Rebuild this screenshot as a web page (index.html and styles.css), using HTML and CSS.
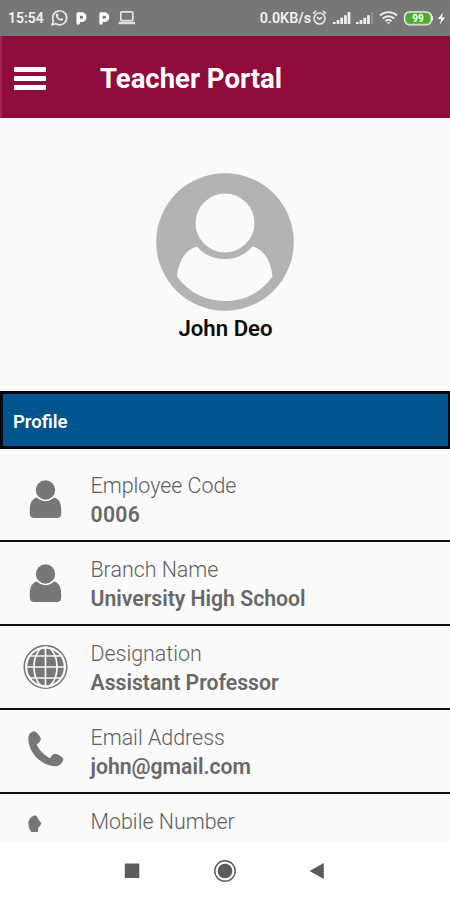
FILE: index.html
```html
<!DOCTYPE html>
<html lang="en">

<head>
    <meta charset="UTF-8">
    <meta name="viewport" content="width=device-width, initial-scale=1.0">
    <title>Teacher Portal</title>
    <link rel="stylesheet" href="styles.css">
</head>

<body>
    <div class="status-bar">
        <span class="time">15:54</span>
        <svg class="status-left" width="88" height="20" viewBox="0 0 88 20">
            <!-- chat -->
            <path d="M2.2 16.8l1.2-4A7 7 0 1 1 6 15.7z" fill="none" stroke="#e6e6e6" stroke-width="1.7" />
            <path d="M6.4 5.8c.8-.8 1.5-.3 2.2 1.5l-.7 1.1c.6 1.2 1.4 2 2.6 2.5l1.1-.9c1.8.7 2 1.3 1.4 2.1-2.8 2.8-9-3-6.6-6.3z" fill="#e6e6e6" />
            <!-- parking -->
            <path d="M28.2 15V6h3.400a3.200 3.200 0 0 1 0 6.400h-1.600" fill="none" stroke="#fff" stroke-width="3.400" stroke-linejoin="round" stroke-linecap="round" />
            <path d="M51 15V6h3.400a3.200 3.200 0 0 1 0 6.400h-1.600" fill="none" stroke="#fff" stroke-width="3.400" stroke-linejoin="round" stroke-linecap="round" />
            <!-- laptop -->
            <rect x="70.800" y="3.800" width="12" height="8.800" rx="1" fill="none" stroke="#e0e0e0" stroke-width="1.700" />
            <path d="M68.500 13.700h16.500v2.500H68.500z" fill="#e0e0e0" />
        </svg>
        <span class="speed">0.0KB/s</span>
        <svg class="status-right" width="136" height="20" viewBox="0 0 136 20">
            <!-- alarm -->
            <circle cx="8.500" cy="10.500" r="5.500" fill="none" stroke="#e6e6e6" stroke-width="1.600" />
            <path d="M2 5.600l3.300-2.800M15 5.600l-3.300-2.800M5.800 9.200l2.700 2 2.500-2" fill="none" stroke="#e6e6e6" stroke-width="1.600" />
            <!-- signal -->
            <path d="M23.300 16v-2M27 16v-4M30.700 16V9.800M34.400 16V7.300M38 16V4" stroke="#eee" stroke-width="2.700" />
            <path d="M46.300 16v-2M50 16v-4M53.700 16V9.800M57.400 16V7.300" stroke="#eee" stroke-width="2.700" />
            <path d="M61 16V4" stroke="#9a9a9a" stroke-width="1.500" />
            <!-- wifi -->
            <path d="M69 7.500a12.500 12.500 0 0 1 17 0M71.800 10.500a8.300 8.300 0 0 1 11.400 0M74.400 13.200a4.600 4.600 0 0 1 6.200 0" fill="none" stroke="#eee" stroke-width="1.900" />
            <path d="M75.800 14.200h3.400l-1.700 2z" fill="#eee" />
            <!-- battery -->
            <rect x="93.500" y="3.800" width="27" height="13" rx="5" fill="#8aa37e" stroke="#e8f2e4" stroke-width="1.300" />
            <rect x="95.500" y="5.500" width="23" height="9.600" rx="3.500" fill="#45b31f" />
            <path d="M121.300 8v4.600" stroke="#e8f2e4" stroke-width="1.300" />
            <text class="battery-level" x="107" y="14" text-anchor="middle">99</text>
            <path d="M132 4.500l-5.200 6.400h3.500l-1.600 5.600 5.300-7h-3.300z" fill="#fff" />
        </svg>
    </div>

    <header class="header">
        <button type="button" class="menu" aria-label="Menu">
            <span></span>
            <span></span>
            <span></span>
        </button>
        <h1>Teacher Portal</h1>
    </header>

    <main class="content">
        <div class="user">
            <svg class="avatar" width="138" height="138" viewBox="0 0 138 138">
                <circle cx="69" cy="69" r="68.800" fill="#b3b3b3" />
                <path d="M41 73.500c-12 3-18.500 15-20 30C33 120 50 128 69 128s36-8 47.500-24.500c-1.500-15-8-27-20-30C89 82 80 86 69 86s-21-4-28-12.500z" fill="#fafafa" />
                <circle cx="69" cy="50" r="29.500" fill="#fafafa" />
            </svg>
            <h2>John Deo</h2>
        </div>

        <div class="section-title">Profile</div>

        <div class="details">
            <div class="row">
                <svg class="icon" viewBox="0 0 46 46">
                    <circle cx="23.500" cy="13" r="9.700" />
                    <path d="M15 20.400Q23.500 28 32 20.400C37 21.500 39.200 26 39.200 33v3.500q0 4.500-4.500 4.500H12.300q-4.500 0-4.500-4.500V33c0-7 2.200-11.500 7.200-12.600z" />
                </svg>
                <div class="info">
                    <span class="label">Employee Code</span>
                    <span class="value code">0006</span>
                </div>
            </div>
            <div class="row">
                <svg class="icon" viewBox="0 0 46 46">
                    <circle cx="23.500" cy="13" r="9.700" />
                    <path d="M15 20.400Q23.500 28 32 20.400C37 21.500 39.200 26 39.200 33v3.500q0 4.500-4.500 4.500H12.300q-4.500 0-4.500-4.500V33c0-7 2.200-11.500 7.200-12.600z" />
                </svg>
                <div class="info">
                    <span class="label">Branch Name</span>
                    <span class="value">University High School</span>
                </div>
            </div>
            <div class="row">
                <svg class="icon" viewBox="0 0 46 46">
                    <circle cx="23.500" cy="22" r="21.300" fill="none" stroke="#777" stroke-width="1.500" />
                    <circle cx="23.500" cy="22" r="18.300" />
                    <g fill="none" stroke="#fafafa" stroke-width="1.700">
                        <path d="M23.500 2.500v39M4 22h39M8 11h31M8 33h31" />
                        <ellipse cx="23.500" cy="22" rx="11.500" ry="20" />
                    </g>
                </svg>
                <div class="info">
                    <span class="label">Designation</span>
                    <span class="value">Assistant Professor</span>
                </div>
            </div>
            <div class="row">
                <svg class="icon" viewBox="0 0 46 46">
                    <path d="M12.500 2.300Q15.500 3 18.800 9.500 19.300 12 14.700 15.500C17 21 22 26 28 29.200 31 24.500 32.500 24.300 34.500 25 41 28 41.300 29.500 41.200 31 40 35 37 37.200 33.500 37.200 20 37.200 6.300 24 6.300 9.500 6.300 5.500 9 2.300 12.500 2.300z" />
                </svg>
                <div class="info">
                    <span class="label">Email Address</span>
                    <span class="value">john@gmail.com</span>
                </div>
            </div>
            <div class="row">
                <svg class="icon" viewBox="0 0 46 46">
                    <path d="M12.800 2.300Q15.300 3 16.300 6.300L19.300 10.300Q18.600 13 16.200 14.800L15.800 19H9.300L7.800 16.500Q6.300 14 6.300 9.500 6.800 4.500 12.800 2.300z" />
                </svg>
                <div class="info">
                    <span class="label">Mobile Number</span>
                </div>
            </div>
        </div>
    </main>

    <nav class="nav-bar">
        <svg width="24" height="24" viewBox="0 0 24 24">
            <rect x="4.800" y="4.500" width="14.500" height="14.500" />
        </svg>
        <svg width="24" height="24" viewBox="0 0 24 24">
            <circle cx="12" cy="12" r="10.200" fill="none" stroke="#5c5c5c" stroke-width="1.400" />
            <circle cx="12" cy="12" r="7.300" />
        </svg>
        <svg width="24" height="24" viewBox="0 0 24 24">
            <path d="M3.500 12L17.800 4v16z" />
        </svg>
    </nav>
</body>

</html>
```
FILE: styles.css
```css
* {
    box-sizing: border-box;
}

body {
    font-family: Roboto, "Liberation Sans", sans-serif;
    margin: 0;
    height: 900px;
    display: flex;
    flex-direction: column;
    background-color: #fafafa;
    overflow: hidden;
}

.status-bar {
    height: 36px;
    flex-shrink: 0;
    display: flex;
    align-items: center;
    background-color: #777;
    color: #f2f2f2;
    padding: 0 3px 0 8px;
    font-size: 14px;
    font-weight: 600;
}

.time {
    width: 42px;
}

.speed {
    margin-left: auto;
    font-size: 14.3px;
}

.battery-level {
    fill: #fff;
    font-size: 10px;
    font-weight: 700;
}

.header {
    height: 82px;
    flex-shrink: 0;
    display: flex;
    align-items: center;
    background-color: #8f0b3c;
    border-left: 2px solid #9c2458;
    padding: 2px 0 0 12px;
}

.menu {
    width: 32px;
    margin-right: 54px;
    padding: 0;
    border: none;
    background: none;
    display: flex;
    flex-direction: column;
    gap: 4px;
}

.menu span {
    width: 32px;
    height: 5px;
    border-radius: 1px;
    background-color: #fff;
}

.header h1 {
    margin: 0;
    font-size: 27.5px;
    font-weight: 700;
    color: #fff;
}

.content {
    flex: 1;
    min-height: 0;
    overflow: hidden;
}

.user {
    height: 273px;
    padding: 55px 0 0;
    text-align: center;
}

.avatar {
    display: block;
    margin: 0 auto;
}

.user h2 {
    margin: 3px 0 0 1px;
    font-size: 22.2px;
    line-height: 28px;
    font-weight: 600;
    color: #0c0c0c;
}

.section-title {
    height: 58px;
    border: 3px solid #000814;
    border-right-width: 2px;
    background-color: #00558d;
    color: #fff;
    font-size: 18.5px;
    font-weight: 600;
    line-height: 56px;
    padding-left: 10px;
}

.details {
    padding-top: 9px;
}

.row {
    height: 84.1px;
    display: flex;
    align-items: center;
    border-bottom: 2px solid #111;
}

.icon {
    width: 46px;
    height: 46px;
    margin: 2px 22.5px 0 22px;
    fill: #777;
}

.info {
    display: flex;
    flex-direction: column;
    height: 56px;
    color: #686868;
}

.label,
.value {
    font-size: 21.2px;
    line-height: 29px;
    white-space: nowrap;
}

.label {
    font-size: 21.4px;
    font-weight: 300;
    color: #606060;
}

.value {
    font-weight: 600;
}

.code {
    letter-spacing: 0.3px;
}

.nav-bar {
    height: 58px;
    flex-shrink: 0;
    display: flex;
    align-items: center;
    justify-content: center;
    gap: 69px;
    background-color: #fff;
}

.nav-bar svg {
    fill: #5c5c5c;
}
```
